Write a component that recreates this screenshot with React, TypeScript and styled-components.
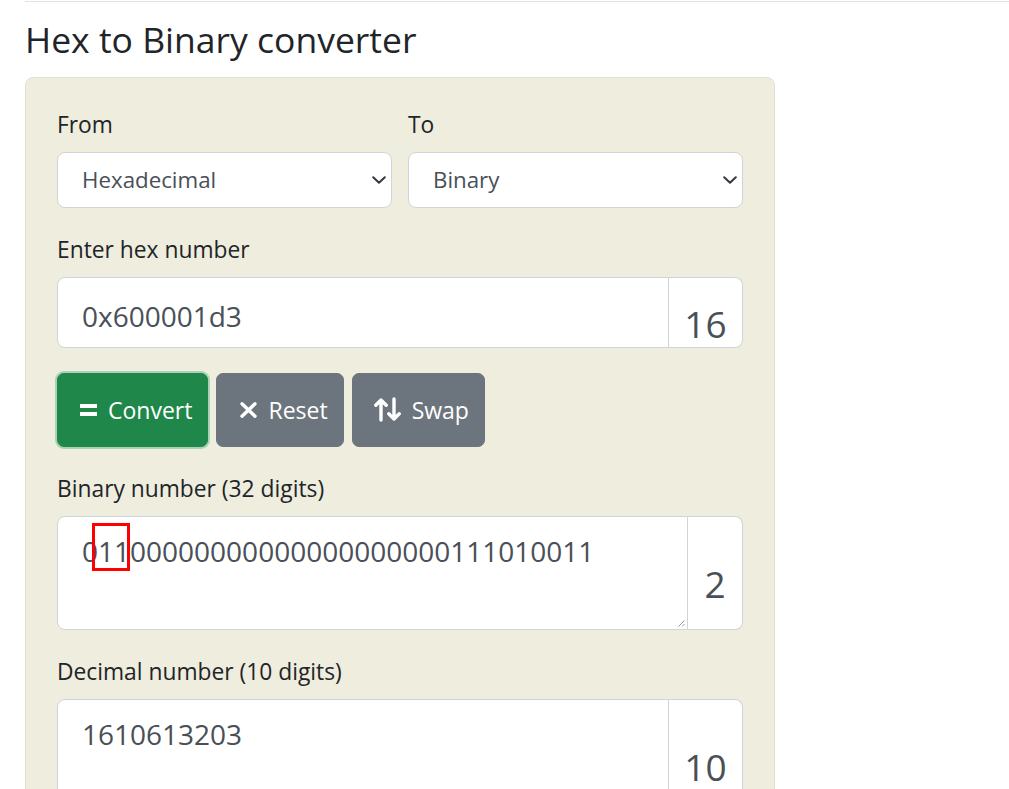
import React from 'react';
import styled, { createGlobalStyle } from 'styled-components';

const GlobalStyle = createGlobalStyle`
  html, body {
    margin: 0;
    padding: 0;
    background: #ffffff;
  }
  body {
    font-family: "Open Sans", "Noto Sans", sans-serif;
    color: #212529;
  }
  * {
    box-sizing: border-box;
  }
`;

const Page = styled.div`
  padding: 0 0 0 25px;
`;

const TopRule = styled.div`
  border-top: 1px solid #dee2e6;
  margin-top: 1px;
`;

const Title = styled.h1`
  margin: 16px 0 16px;
  font-size: 35.5px;
  font-weight: 400;
  line-height: 1.2;
  color: #212529;
`;

const Card = styled.form`
  width: 750px;
  background: #efeddd;
  border: 1px solid #e3e1d0;
  border-radius: 8px;
  padding: 30px 31px 40px;
  display: flex;
  flex-direction: column;
  gap: 25px;
`;

const Row = styled.div`
  display: grid;
  grid-template-columns: 1fr 1fr;
  gap: 16px;
`;

const Group = styled.div`
  display: flex;
  flex-direction: column;
`;

const Label = styled.label`
  font-size: 22.8px;
  line-height: 34px;
  margin-bottom: 10px;
  color: #212529;
`;

const SelectWrap = styled.div`
  position: relative;
`;

const Select = styled.select`
  width: 100%;
  height: 56px;
  appearance: none;
  -webkit-appearance: none;
  background: #ffffff;
  border: 1px solid #ced4da;
  border-radius: 8px;
  padding: 0 40px 0 24px;
  font-family: inherit;
  font-size: 22.3px;
  color: #495057;
  outline: none;
`;

const Chevron = styled.svg`
  position: absolute;
  right: 6px;
  top: 50%;
  margin-top: -4px;
  pointer-events: none;
`;

const InputGroup = styled.div`
  display: flex;
  align-items: stretch;
`;

const fieldCss = `
  flex: 1;
  min-width: 0;
  background: #ffffff;
  border: 1px solid #ced4da;
  border-radius: 8px 0 0 8px;
  font-family: "Open Sans", "Noto Sans", sans-serif;
  font-size: 28px;
  line-height: 42px;
  color: #495057;
  outline: none;
`;

const TextInput = styled.input`
  ${fieldCss}
  height: 71px;
  padding: 17px 24px 10px;
`;

const FieldBox = styled.div<{ $height: number }>`
  ${fieldCss}
  position: relative;
  height: ${p => p.$height}px;
  padding: 13px 24px 14px;
  white-space: nowrap;
  overflow: hidden;
`;

const Addon = styled.span<{ $width: number }>`
  width: ${p => p.$width}px;
  display: flex;
  align-items: center;
  justify-content: center;
  padding-top: 22px;
  background: #ffffff;
  border: 1px solid #ced4da;
  border-left: none;
  border-radius: 0 8px 8px 0;
  font-size: 37px;
  line-height: 1;
  color: #495057;
`;

const Marked = styled.span`
  position: relative;

  &::after {
    content: '';
    position: absolute;
    left: -6px;
    right: 0;
    top: -9px;
    bottom: -1px;
    border: 3px solid #ff0000;
  }
`;

const Grip = styled.svg`
  position: absolute;
  right: 2px;
  bottom: 2px;
`;

const Buttons = styled.div`
  display: flex;
  gap: 8px;
`;

const Button = styled.button<{ $variant: 'success' | 'secondary' }>`
  height: 74px;
  display: inline-flex;
  align-items: center;
  gap: 11px;
  padding: 0 15px 0 21px;
  border: 1px solid ${p => (p.$variant === 'success' ? '#1e8749' : '#6c757d')};
  border-radius: 7px;
  background: ${p => (p.$variant === 'success' ? '#1e8749' : '#6c757d')};
  box-shadow: ${p => (p.$variant === 'success' ? '0 0 0 2px #a9d3b6' : 'none')};
  color: #ffffff;
  font-family: inherit;
  font-size: 23px;
  line-height: 36px;
  cursor: pointer;
`;

const ChevronIcon: React.FC = () => (
  <Chevron width="14" height="8" viewBox="0 0 14 8">
    <path d="M1.2 1.2L7 6.8l5.8-5.6" fill="none" stroke="#343a40" strokeWidth="2" strokeLinecap="round" strokeLinejoin="round" />
  </Chevron>
);

const App: React.FC = () => {
  return (
    <Page>
      <GlobalStyle />
      <TopRule />
      <Title>Hex to Binary converter</Title>
      <Card onSubmit={e => e.preventDefault()}>
        <Row>
          <Group>
            <Label>From</Label>
            <SelectWrap>
              <Select defaultValue="hex">
                <option value="hex">Hexadecimal</option>
              </Select>
              <ChevronIcon />
            </SelectWrap>
          </Group>
          <Group>
            <Label>To</Label>
            <SelectWrap>
              <Select defaultValue="bin">
                <option value="bin">Binary</option>
              </Select>
              <ChevronIcon />
            </SelectWrap>
          </Group>
        </Row>

        <Group>
          <Label>Enter hex number</Label>
          <InputGroup>
            <TextInput defaultValue="0x600001d3" />
            <Addon $width={74}>16</Addon>
          </InputGroup>
        </Group>

        <Buttons>
          <Button type="submit" $variant="success">
            <svg width="18" height="12" viewBox="0 0 18 12">
              <rect x="1" y="0" width="17" height="4" fill="#fff" />
              <rect x="1" y="8" width="17" height="4" fill="#fff" />
            </svg>
            Convert
          </Button>
          <Button type="reset" $variant="secondary">
            <svg width="19" height="16" viewBox="0 0 19 16">
              <path d="M4 1.8l13 12.4M17 1.8L4 14.2" stroke="#fff" strokeWidth="3.4" strokeLinecap="round" />
            </svg>
            Reset
          </Button>
          <Button type="button" $variant="secondary">
            <svg width="27" height="25" viewBox="0 0 27 25">
              <path d="M7 23V3M1.8 8.2L7 3l5.2 5.2M20 2v20M14.8 16.8L20 22l5.2-5.2" fill="none" stroke="#fff" strokeWidth="3.4" strokeLinecap="round" strokeLinejoin="round" />
            </svg>
            Swap
          </Button>
        </Buttons>

        <Group>
          <Label>Binary number (32 digits)</Label>
          <InputGroup>
            <FieldBox $height={114}>
              0<Marked>11</Marked>00000000000000000000111010011
              <Grip width="8" height="8" viewBox="0 0 8 8">
                <path d="M7.5 1.5L1.5 7.5M7.5 5L5 7.5" stroke="#8a8a8a" strokeWidth="0.9" />
              </Grip>
            </FieldBox>
            <Addon $width={55}>2</Addon>
          </InputGroup>
        </Group>

        <Group>
          <Label>Decimal number (10 digits)</Label>
          <InputGroup>
            <FieldBox $height={114}>1610613203</FieldBox>
            <Addon $width={74}>10</Addon>
          </InputGroup>
        </Group>
      </Card>
    </Page>
  );
};

export default App;
